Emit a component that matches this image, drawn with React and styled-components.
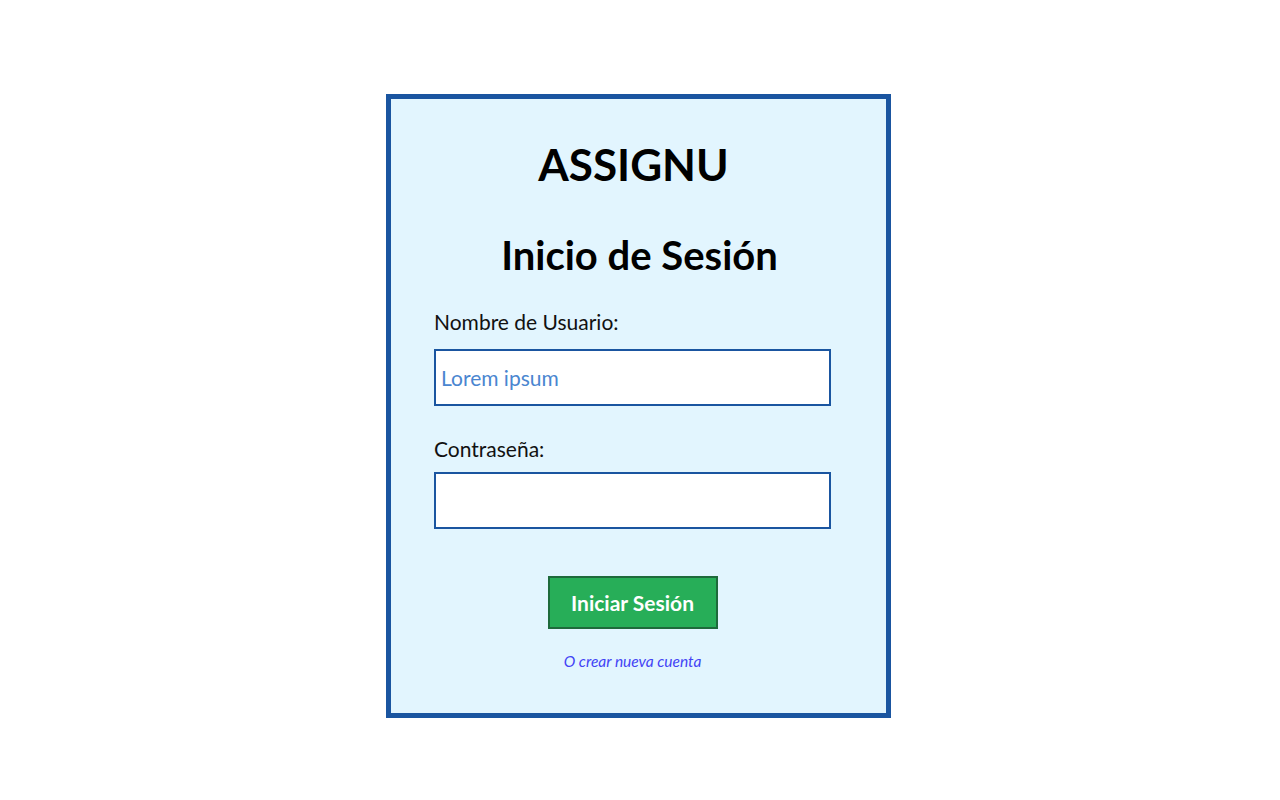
import styled, { createGlobalStyle } from "styled-components";

const Global = createGlobalStyle`
  body {
    margin: 0;
    background: #ffffff;
    font-family: Lato, "Noto Sans", sans-serif;
  }
`;

const Page = styled.main`
  display: flex;
  justify-content: center;
  padding: 94px 3px 0 0;
`;

// Tarjeta del formulario de login
const Tarjeta = styled.form`
  box-sizing: border-box;
  width: 505px;
  height: 624px;
  border: 5px solid #1a55a0;
  background: #e2f5fe;
  padding: 39px 55px 0 43px;
  display: flex;
  flex-direction: column;
`;

const Marca = styled.h1`
  margin: 0;
  padding-left: 2px;
  font-size: 44px;
  font-weight: 700;
  line-height: 1.2;
  text-align: center;
  color: #000;
`;

const Titulo = styled.h2`
  margin: 40px -7px 0 0;
  padding-left: 7px;
  font-size: 40px;
  font-weight: 700;
  line-height: 49px;
  text-align: center;
  color: #000;
`;

const Etiqueta = styled.label`
  display: block;
  font-size: 21px;
  line-height: 24px;
  color: #111;
  margin-top: ${({ $arriba }) => $arriba}px;
`;

const Campo = styled.input`
  box-sizing: border-box;
  width: 100%;
  height: 57px;
  margin-top: ${({ $arriba }) => $arriba}px;
  border: 2px solid #1a55a0;
  background: #fff;
  padding: 0 5px;
  font-family: Lato, "Noto Sans", sans-serif;
  font-size: 21px;
  color: #222;
  outline: none;

  &::placeholder {
    color: #4a86d0;
    opacity: 1;
  }
`;

const Boton = styled.button`
  align-self: center;
  box-sizing: border-box;
  width: 170px;
  height: 53px;
  margin-top: 47px;
  border: 2px solid #1e6a3b;
  background: #27ae58;
  color: #fff;
  font-family: Lato, "Noto Sans", sans-serif;
  font-size: 21px;
  font-weight: 700;
  cursor: pointer;
`;

const Enlace = styled.a`
  align-self: center;
  margin-top: 23px;
  font-size: 15.5px;
  line-height: 1.2;
  font-style: italic;
  color: #4343f5;
  text-decoration: none;
`;

export default function App() {
  return (
    <>
      <Global />
      <Page>
        <Tarjeta onSubmit={(e) => e.preventDefault()}>
          <Marca>ASSIGNU</Marca>
          <Titulo>Inicio de Sesión</Titulo>
          <Etiqueta $arriba={30} htmlFor="usuario">
            Nombre de Usuario:
          </Etiqueta>
          <Campo $arriba={15} id="usuario" type="text" placeholder="Lorem ipsum" />
          <Etiqueta $arriba={31} htmlFor="clave">
            Contraseña:
          </Etiqueta>
          <Campo $arriba={11} id="clave" type="password" />
          <Boton type="submit">Iniciar Sesión</Boton>
          <Enlace href="#">O crear nueva cuenta</Enlace>
        </Tarjeta>
      </Page>
    </>
  );
}
